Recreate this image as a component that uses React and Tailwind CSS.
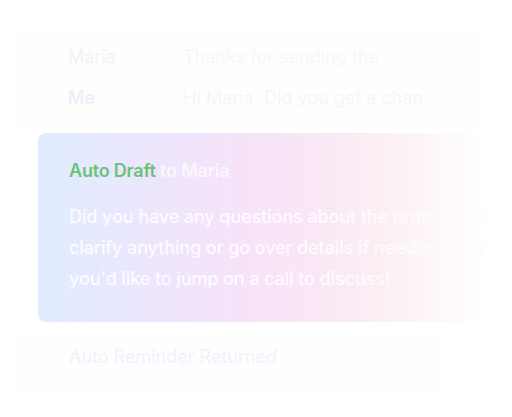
export default function App() {
  return (
    <div
      className="relative h-[417px] w-[512px] overflow-hidden bg-white"
      style={{ fontFamily: 'Inter, "Noto Sans", sans-serif' }}
    >
      <div className="flex flex-col pt-[33px]">
        {/* faded conversation rows */}
        <div className="mx-[15px] flex h-[96px] w-[465px] flex-col gap-[14px] rounded-lg bg-[#fefefd] pl-[53px] pt-[10px] text-[18px]">
          <div className="flex">
            <span className="w-[115px] text-[#f4f2f2]">Maria</span>
            <span className="text-[#f8f7f5]">Thanks for sending the</span>
          </div>
          <div className="flex">
            <span className="w-[115px] font-medium text-[#f4eafb]">Me</span>
            <span className="text-[#f6f6fa]">Hi Maria, Did you get a chan</span>
          </div>
        </div>

        {/* gradient draft card */}
        <div className="ml-[38px] mt-[4px] h-[189px] w-[447px] overflow-hidden rounded-lg bg-[linear-gradient(90deg,#e0edff_0%,#ece6fd_25%,#f6e3f9_45%,#f9e7f5_62%,#fcf1f3_80%,#ffffff_100%)] pl-[31px] pt-[24px]">
          <div className="text-[18px] font-semibold tracking-[-0.2px]">
            <span className="text-[#6cc277]">Auto Draft</span>
            <span className="text-[#fbf7fd]"> to Maria</span>
          </div>
          <p className="mt-[17px] w-[530px] text-[18px] font-medium leading-[31px] tracking-[-0.1px] text-[#fdfbff]">
            Did you have any questions about the proposal? I'm happy to clarify anything or go over details if needed. Let me know if you'd like to jump on a call to discuss!
          </p>
        </div>

        {/* faded reminder card */}
        <div className="mx-[15px] mt-[12px] h-[62px] w-[423px] rounded-lg bg-[#fefefe] pl-[54px] pt-[9px]">
          <span className="text-[18px] text-[#f5f0fb]">Auto Reminder Returned</span>
        </div>
      </div>
    </div>
  )
}
